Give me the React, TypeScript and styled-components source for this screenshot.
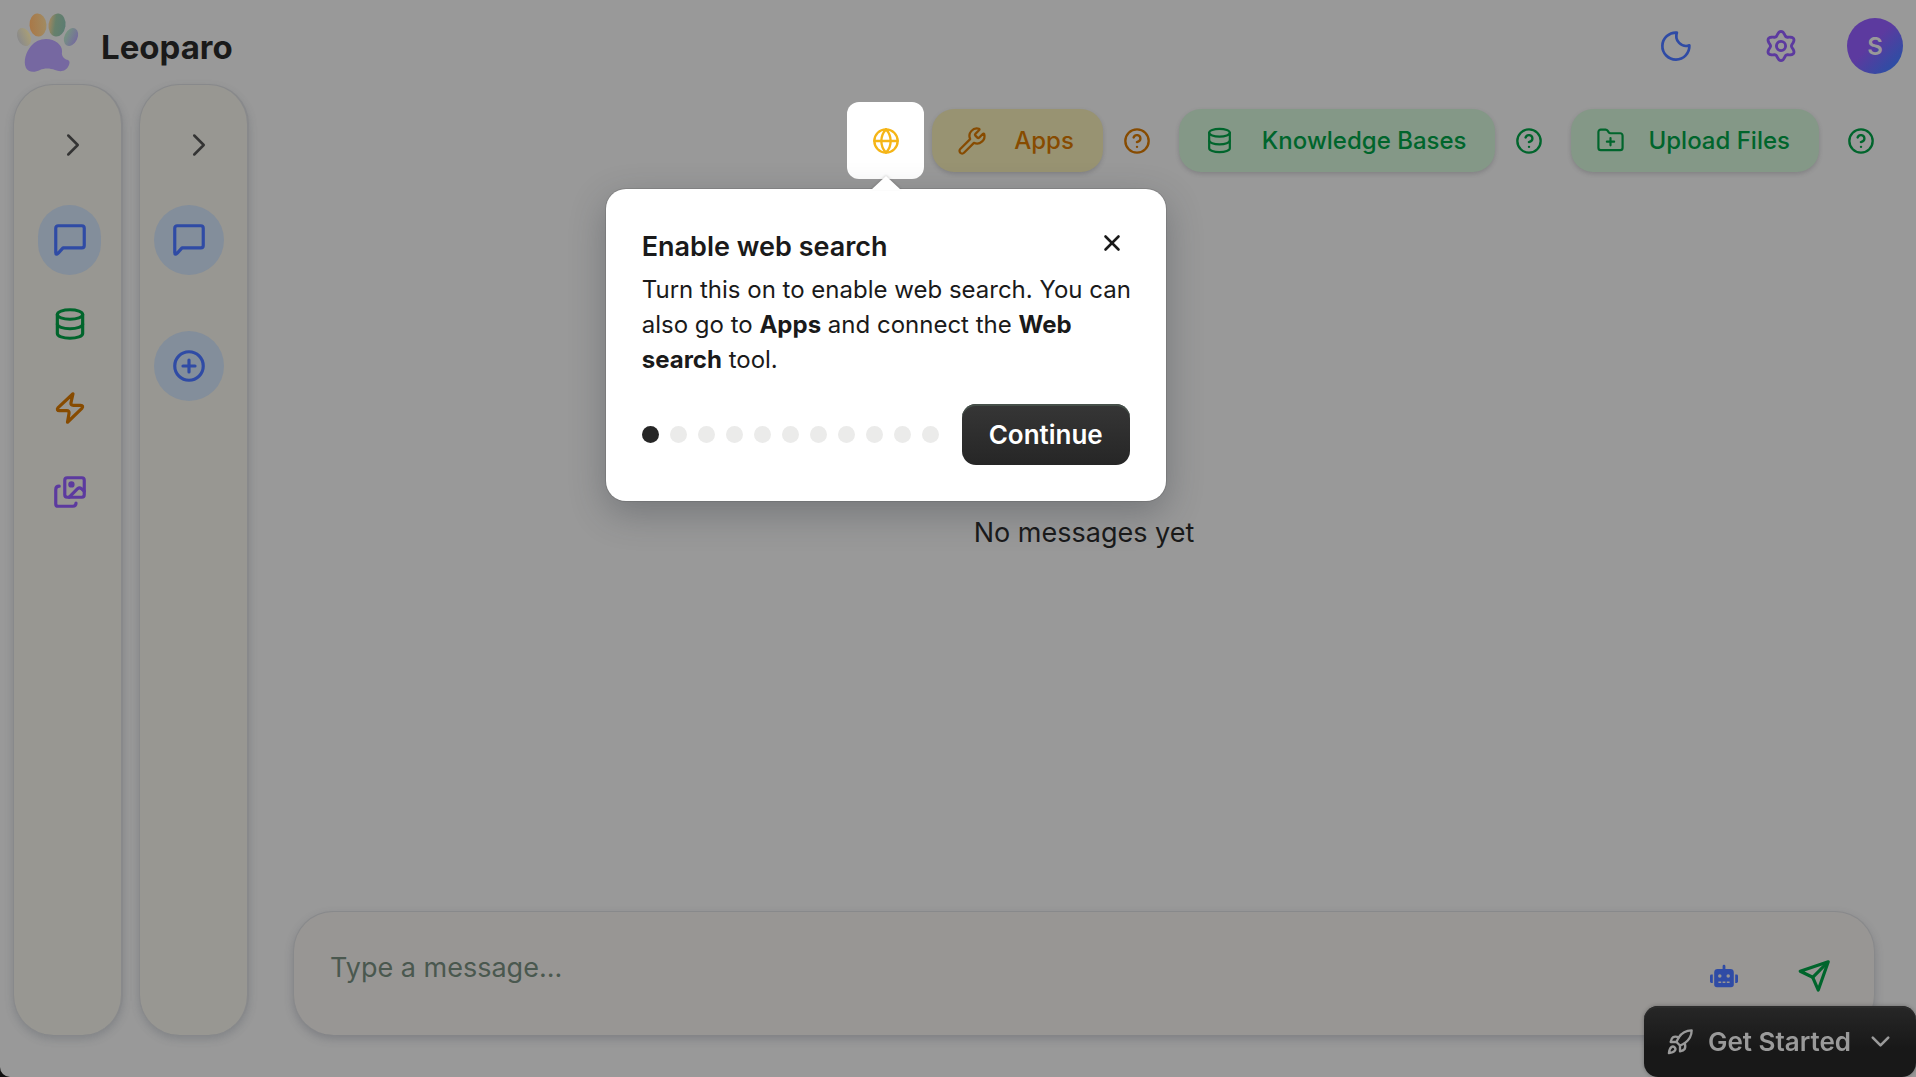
import React from "react";
import styled, { createGlobalStyle } from "styled-components";
import {
  ChevronDown,
  ChevronRight,
  CircleHelp,
  FolderPlus,
  Globe,
  Rocket,
  Wrench,
  X,
} from "lucide-react";
import { FaRobot } from "react-icons/fa";

const color = {
  page: "#999999",
  panel: "#989792",
  composer: "#989694",
  line: "#88898b",
  ink: "#1a1a1a",
  blue: "#2f4ba5",
  blueSoft: "#838e9b",
  purple: "#5c3a9f",
  green: "#00652c",
  greenSoft: "#849887",
  amber: "#874b00",
  amberSoft: "#989372",
};

const GlobalStyle = createGlobalStyle`
  *, *::before, *::after { box-sizing: border-box; }
  body {
    margin: 0;
    background: #101010;
    color: ${color.ink};
    font-family: Inter, "Liberation Sans", sans-serif;
  }
  button, input { font: inherit; color: inherit; }
  button { border: 0; padding: 0; background: none; cursor: pointer; }
  svg { display: block; flex: none; }
`;

const Page = styled.div`
  min-height: 100vh;
  display: flex;
  flex-direction: column;
  background: ${color.page};
  border-radius: 0 0 0 10px;
`;

const Header = styled.header`
  height: 84px;
  flex: none;
  display: flex;
  align-items: center;
  justify-content: space-between;
  padding: 0 13px 0 14px;
`;

const Brand = styled.div`
  display: flex;
  align-items: center;
  gap: 19px;
`;

const BrandName = styled.h1`
  margin: 0;
  padding-top: 10px;
  font-size: 33px;
  line-height: 40px;
  font-weight: 700;
`;

const HeaderActions = styled.div<{ $gap: number }>`
  display: flex;
  align-items: center;
  gap: ${(p) => p.$gap}px;
`;

const HeaderEnd = styled(HeaderActions)`
  padding-top: 8px;
`;

const IconButton = styled.button<{ $tone: string; $size?: number }>`
  width: ${(p) => p.$size ?? 56}px;
  height: ${(p) => p.$size ?? 56}px;
  display: flex;
  align-items: center;
  justify-content: center;
  color: ${(p) => p.$tone};
`;

const Avatar = styled.button`
  width: 56px;
  height: 56px;
  border-radius: 50%;
  background: linear-gradient(135deg, ${color.purple} 45%, #2850a5 90%);
  color: ${color.page};
  font-size: 24px;
  font-weight: 600;
`;

const Body = styled.div`
  flex: 1;
  display: flex;
  gap: 16px;
  padding: 0 41px 42px 13px;
`;

const Rail = styled.nav`
  width: 110px;
  flex: none;
  display: flex;
  flex-direction: column;
  gap: 32px;
  padding-top: 32px;
  border: 1px solid ${color.line};
  border-bottom: 0;
  border-right-width: 2px;
  border-radius: 40px;
  background: ${color.panel};
  box-shadow: 0 4px 8px rgba(60, 66, 80, 0.24);
`;

const RailToggle = styled.button`
  width: 56px;
  height: 56px;
  display: flex;
  align-items: center;
  justify-content: center;
  align-self: center;
  margin-left: 10px;
  color: #343434;
`;

const RailList = styled.div<{ $gap: number; $offset: number }>`
  display: flex;
  flex-direction: column;
  align-items: flex-start;
  gap: ${(p) => p.$gap}px;
  padding-left: ${(p) => p.$offset}px;
`;

const RailItem = styled.button<{ $tone: string; $width: number; $active?: boolean }>`
  width: ${(p) => p.$width}px;
  height: 70px;
  display: flex;
  align-items: center;
  justify-content: center;
  border-radius: 35px;
  color: ${(p) => p.$tone};
  background: ${(p) => (p.$active ? color.blueSoft : "transparent")};
`;

const Main = styled.main`
  flex: 1;
  min-width: 0;
  display: flex;
  flex-direction: column;
  padding: 18px 0 0 28px;
`;

const Toolbar = styled.div`
  display: flex;
  align-items: center;
  justify-content: flex-end;
  gap: 28px;
`;

const ToolGroup = styled.div<{ $gap: number }>`
  display: flex;
  align-items: center;
  gap: ${(p) => p.$gap}px;
`;

const Spotlight = styled.div`
  position: relative;
  width: 77px;
  height: 77px;
  border-radius: 12px;
  background: #ffffff;
  display: flex;
  align-items: center;
  justify-content: center;
`;

const ToolButton = styled.button<{ $tone: string; $fill: string; $gap: number }>`
  height: 63px;
  display: flex;
  align-items: center;
  gap: ${(p) => p.$gap}px;
  padding: 0 29px 0 25px;
  border-radius: 22px;
  background: ${(p) => p.$fill};
  color: ${(p) => p.$tone};
  font-size: 24px;
  font-weight: 500;
  line-height: 32px;
  white-space: nowrap;
  box-shadow: 0 2px 4px rgba(50, 50, 60, 0.22);
`;

const Popover = styled.section`
  position: absolute;
  z-index: 2;
  top: 87px;
  left: 50%;
  width: 560px;
  transform: translateX(-50%);
  padding: 36px;
  border-radius: 20px;
  background: #ffffff;
  box-shadow: 0 0 0 1px rgba(70, 70, 70, 0.2), 0 12px 36px rgba(40, 46, 56, 0.32);

  &::before {
    content: "";
    position: absolute;
    top: -13px;
    left: 50%;
    margin-left: -15px;
    border: 15px solid transparent;
    border-top: 0;
    border-bottom: 14px solid #ffffff;
    filter: drop-shadow(0 -1px 1px rgba(0, 0, 0, 0.14));
  }
`;

const PopoverHead = styled.div`
  display: flex;
  align-items: flex-start;
  justify-content: space-between;
`;

const PopoverTitle = styled.h2`
  margin: 0;
  padding-top: 2px;
  font-size: 27px;
  line-height: 40px;
  font-weight: 600;
`;

const PopoverText = styled.p`
  margin: 5px -10px 27px 0;
  font-size: 24px;
  line-height: 35px;
`;

const PopoverFoot = styled.div`
  display: flex;
  align-items: center;
  justify-content: space-between;
`;

const Steps = styled.div`
  display: flex;
  gap: 11px;
`;

const Step = styled.span<{ $current: boolean }>`
  width: 17px;
  height: 17px;
  border-radius: 50%;
  background: ${(p) => (p.$current ? "#262626" : "#ebebea")};
`;

const PrimaryButton = styled.button`
  height: 61px;
  padding: 0 27px;
  border-radius: 14px;
  background: linear-gradient(#363636, #262626);
  box-shadow: inset 0 2px 0 #46504a;
  color: #ffffff;
  font-size: 26px;
  font-weight: 600;
`;

const Empty = styled.div`
  flex: 1;
  display: flex;
  align-items: center;
  justify-content: center;
  padding-bottom: 24px;
  font-size: 27px;
  line-height: 36px;
`;

const Composer = styled.form`
  height: 124px;
  display: flex;
  align-items: flex-start;
  padding: 36px 32px 0 36px;
  border: 1px solid ${color.line};
  border-bottom: 0;
  border-radius: 40px;
  background: ${color.composer};
  box-shadow: 0 4px 8px rgba(60, 66, 80, 0.28);
`;

const MessageInput = styled.input`
  flex: 1;
  min-width: 0;
  padding: 0;
  border: 0;
  outline: 0;
  background: transparent;
  font-size: 27px;
  line-height: 40px;
  &::placeholder { color: #4a584f; opacity: 1; }
`;

const ComposerActions = styled.div`
  display: flex;
  gap: 34px;
`;

const GetStarted = styled.button`
  position: fixed;
  right: 0;
  bottom: 0;
  height: 71px;
  display: flex;
  align-items: center;
  gap: 14px;
  padding: 0 20px 0 22px;
  border-radius: 14px;
  background: linear-gradient(#272727, #181818 60%);
  box-shadow: inset 0 2px 0 #2c2c2c, 0 0 4px rgba(0, 0, 0, 0.3);
  color: #9a9a9a;
  font-size: 26px;
  font-weight: 600;
  white-space: nowrap;
`;

type GlyphProps = { size: number; stroke?: number; children: React.ReactNode };

const Glyph = ({ size, stroke = 2, children }: GlyphProps) => (
  <svg
    width={size}
    height={size}
    viewBox="0 0 24 24"
    fill="none"
    stroke="currentColor"
    strokeWidth={stroke}
    strokeLinecap="round"
    strokeLinejoin="round"
    aria-hidden="true"
  >
    {children}
  </svg>
);

const ChatIcon = () => (
  <Glyph size={38}>
    <path d="M21 15.5a1.5 1.5 0 0 1-1.5 1.5H7.6L4.6 20.3Q3 21.8 3 20V4.5A1.5 1.5 0 0 1 4.5 3h15A1.5 1.5 0 0 1 21 4.5z" />
  </Glyph>
);

const MoonIcon = () => (
  <Glyph size={36} stroke={1.8}>
    <path d="M12.6 3.1A6.6 6.6 0 0 0 20.9 11.6 9 9 0 1 1 12.6 3.1z" />
  </Glyph>
);

const DatabaseIcon = ({ size, stroke }: { size: number; stroke?: number }) => (
  <Glyph size={size} stroke={stroke}>
    <ellipse cx="12" cy="6" rx="8" ry="3" />
    <path d="M4 6v6c0 1.7 3.6 3 8 3s8-1.3 8-3V6" />
    <path d="M4 12v6c0 1.7 3.6 3 8 3s8-1.3 8-3v-6" />
  </Glyph>
);

const BoltIcon = () => (
  <Glyph size={38}>
    <path d="M13.9 3 4.5 11.8C3.6 12.8 4 13.7 5.3 13.7H9.9Q11.7 13.7 11.4 15.3L10.4 21 19.5 12.2C20.4 11.2 20 10.3 18.7 10.3H14.1Q12.3 10.3 12.6 8.7z" />
  </Glyph>
);

const GalleryIcon = () => (
  <Glyph size={38}>
    <rect x="8.7" y="3" width="12.3" height="12.3" rx="1.5" />
    <circle cx="12.9" cy="7.2" r="1" fill="currentColor" />
    <path d="m11.5 15.2 5.3-5.3Q18 8.9 19.2 9.9L21 11.5" />
    <path d="M5.2 8.3Q3 8.3 3 10.5v9Q3 21 4.5 21h9.3q2 0 2-2" />
  </Glyph>
);

const PlusIcon = () => (
  <Glyph size={38}>
    <circle cx="12" cy="12" r="9" />
    <path d="M8.2 12h7.6M12 8.2v7.6" />
  </Glyph>
);

const gearOutline = Array.from({ length: 120 }, (_, i) => {
  const angle = (i / 120) * Math.PI * 2;
  const radius = 7.9 - 1.3 * Math.cos(angle * 6);
  const x = 12 + radius * Math.cos(angle);
  const y = 12 + radius * Math.sin(angle);
  return `${x.toFixed(2)},${y.toFixed(2)}`;
}).join(" ");

const GearIcon = () => (
  <Glyph size={38} stroke={1.8}>
    <polygon points={gearOutline} />
    <circle cx="12" cy="12" r="2.9" />
  </Glyph>
);

const SendIcon = () => (
  <Glyph size={38}>
    <path d="M21 3 3.3 9 11.2 12.8 14.7 20.9z" />
    <path d="m11.2 12.8 8.6-8.6" />
  </Glyph>
);

const PawLogo = () => (
  <svg width="68" height="64" viewBox="0 0 68 64" role="img" aria-label="Leoparo logo">
    <defs>
      <linearGradient id="toe-a"><stop offset="0" stopColor="#8a8a8b" /><stop offset="1" stopColor="#a89e77" /></linearGradient>
      <linearGradient id="toe-b"><stop offset="0" stopColor="#a97847" /><stop offset="1" stopColor="#a18b62" /></linearGradient>
      <linearGradient id="toe-c"><stop offset="0" stopColor="#a1875e" /><stop offset=".4" stopColor="#66806b" /><stop offset="1" stopColor="#5b7c72" /></linearGradient>
      <linearGradient id="toe-d"><stop offset="0" stopColor="#76947f" /><stop offset="1" stopColor="#756c9d" /></linearGradient>
    </defs>
    <ellipse cx="10" cy="27" rx="6.500" ry="9.500" transform="rotate(-24 10 27)" fill="url(#toe-a)" />
    <ellipse cx="24" cy="15" rx="8.500" ry="11.500" transform="rotate(-4 24 15)" fill="url(#toe-b)" />
    <ellipse cx="43" cy="15" rx="8.500" ry="11.500" transform="rotate(8 43 15)" fill="url(#toe-c)" />
    <ellipse cx="57" cy="27" rx="6.500" ry="9.500" transform="rotate(26 57 27)" fill="url(#toe-d)" />
    <path
      d="M32 29C41 29 48.500 35 48 41.500Q47 47 52 49.500Q57 50 55 55C52 62 46 62 41 60C36 58 30 58 26 60C20 63 14 62 12 58C9 51 12 42 17 36Q23 29 32 29z"
      fill="#7668a1"
    />
  </svg>
);

const Help = ({ tone, topic }: { tone: string; topic: string }) => (
  <IconButton $tone={tone} $size={28} aria-label={`About ${topic}`}>
    <CircleHelp size={28} strokeWidth={2} />
  </IconButton>
);

const STEP_COUNT = 11;

export default function App() {
  return (
    <>
      <GlobalStyle />
      <Page>
        <Header>
          <Brand>
            <PawLogo />
            <BrandName>Leoparo</BrandName>
          </Brand>
          <HeaderEnd $gap={38}>
            <HeaderActions $gap={49}>
              <IconButton $tone={color.blue} aria-label="Dark mode">
                <MoonIcon />
              </IconButton>
              <IconButton $tone={color.purple} aria-label="Settings">
                <GearIcon />
              </IconButton>
            </HeaderActions>
            <Avatar aria-label="Account">S</Avatar>
          </HeaderEnd>
        </Header>

        <Body>
          <Rail aria-label="Primary">
            <RailToggle aria-label="Expand menu">
              <ChevronRight size={38} strokeWidth={1.6} />
            </RailToggle>
            <RailList $gap={14} $offset={24}>
              <RailItem $tone={color.blue} $width={63} $active aria-label="Chats">
                <ChatIcon />
              </RailItem>
              <RailItem $tone={color.green} $width={63} aria-label="Knowledge">
                <DatabaseIcon size={38} />
              </RailItem>
              <RailItem $tone={color.amber} $width={63} aria-label="Automations">
                <BoltIcon />
              </RailItem>
              <RailItem $tone={color.purple} $width={63} aria-label="Gallery">
                <GalleryIcon />
              </RailItem>
            </RailList>
          </Rail>

          <Rail aria-label="Conversations">
            <RailToggle aria-label="Expand conversations">
              <ChevronRight size={38} strokeWidth={1.6} />
            </RailToggle>
            <RailList $gap={56} $offset={14}>
              <RailItem $tone={color.blue} $width={70} $active aria-label="Conversation">
                <ChatIcon />
              </RailItem>
              <RailItem $tone={color.blue} $width={70} $active aria-label="New conversation">
                <PlusIcon />
              </RailItem>
            </RailList>
          </Rail>

          <Main>
            <Toolbar>
              <ToolGroup $gap={20}>
                <ToolGroup $gap={8}>
                  <Spotlight>
                    <IconButton $tone="#f5b517" aria-label="Web search">
                      <Globe size={28} strokeWidth={2} />
                    </IconButton>
                    <Popover role="dialog" aria-labelledby="tour-title">
                      <PopoverHead>
                        <PopoverTitle id="tour-title">Enable web search</PopoverTitle>
                        <IconButton $tone={color.ink} $size={36} aria-label="Close">
                          <X size={26} strokeWidth={2.4} />
                        </IconButton>
                      </PopoverHead>
                      <PopoverText>
                        Turn this on to enable web search. You can also go to <strong>Apps</strong> and
                        connect the <strong>Web search</strong> tool.
                      </PopoverText>
                      <PopoverFoot>
                        <Steps aria-label={`Step 1 of ${STEP_COUNT}`}>
                          {Array.from({ length: STEP_COUNT }, (_, i) => (
                            <Step key={i} $current={i === 0} />
                          ))}
                        </Steps>
                        <PrimaryButton>Continue</PrimaryButton>
                      </PopoverFoot>
                    </Popover>
                  </Spotlight>
                  <ToolButton $tone={color.amber} $fill={color.amberSoft} $gap={27}>
                    <Wrench size={30} strokeWidth={1.8} />
                    Apps
                  </ToolButton>
                </ToolGroup>
                <Help tone={color.amber} topic="apps" />
              </ToolGroup>
              <ToolGroup $gap={20}>
                <ToolButton $tone={color.green} $fill={color.greenSoft} $gap={27}>
                  <DatabaseIcon size={31} stroke={1.7} />
                  Knowledge Bases
                </ToolButton>
                <Help tone={color.green} topic="knowledge bases" />
              </ToolGroup>
              <ToolGroup $gap={28}>
                <ToolButton $tone={color.green} $fill={color.greenSoft} $gap={23}>
                  <FolderPlus size={29} strokeWidth={1.8} />
                  Upload Files
                </ToolButton>
                <Help tone={color.green} topic="uploads" />
              </ToolGroup>
            </Toolbar>

            <Empty>No messages yet</Empty>

            <Composer onSubmit={(e) => e.preventDefault()}>
              <MessageInput aria-label="Message" placeholder="Type a message..." />
              <ComposerActions>
                <IconButton type="button" $tone={color.blue} aria-label="Choose assistant">
                  <FaRobot size={28} />
                </IconButton>
                <IconButton type="submit" $tone={color.green} aria-label="Send">
                  <SendIcon />
                </IconButton>
              </ComposerActions>
            </Composer>
          </Main>
        </Body>

        <GetStarted>
          <Rocket size={28} strokeWidth={2} />
          Get Started
          <ChevronDown size={31} strokeWidth={2} />
        </GetStarted>
      </Page>
    </>
  );
}
